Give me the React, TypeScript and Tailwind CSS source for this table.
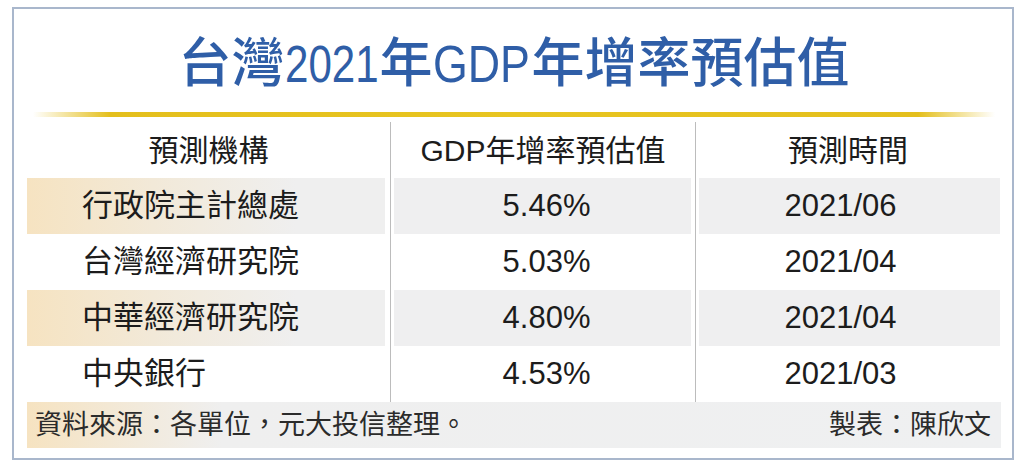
const rows = [
  { org: '行政院主計總處', rate: '5.46%', date: '2021/06', shaded: true },
  { org: '台灣經濟研究院', rate: '5.03%', date: '2021/04', shaded: false },
  { org: '中華經濟研究院', rate: '4.80%', date: '2021/04', shaded: true },
  { org: '中央銀行', rate: '4.53%', date: '2021/03', shaded: false },
];

const body = "font-['Liberation_Sans','Noto_Sans_CJK_TC',sans-serif]";

// Condensed latin run inside the title (the source face is a narrow sans)
function Narrow({ text, width, scale }: { text: string; width: string; scale: string }) {
  return (
    <span className={`inline-block ${width} whitespace-nowrap`}>
      <span className={`inline-block origin-left ${scale} font-['Liberation_Sans',sans-serif] text-[52px]`}>
        {text}
      </span>
    </span>
  );
}

export default function App() {
  return (
    <div className={`w-[1024px] h-[467px] bg-white pt-[7px] pl-[12px] ${body}`}>
      <div className="w-[1002px] h-[453px] border-2 border-[#a9b7cc] pl-[13px] pr-[11px]">
        {/* Title */}
        <div className="h-[103px] flex items-center justify-center pt-[1px]">
          <h1 className="text-[53px] leading-none font-medium text-[#2f5ea7] font-['Noto_Sans_CJK_TC',sans-serif] whitespace-nowrap">
            台灣
            <Narrow text="2021" width="w-[95px]" scale="scale-x-[0.81]" />
            年
            <Narrow text="GDP" width="w-[99px]" scale="scale-x-[0.86]" />
            年增率預估值
          </h1>
        </div>

        {/* Gold rule */}
        <div className="mx-[6px] h-[5px] bg-[linear-gradient(to_right,rgba(230,193,26,0),#e4bf1c_8%,#e8c520_50%,#e4bf1c_92%,rgba(230,193,26,0))]" />

        {/* Table */}
        <div className="mt-[5px] text-[#1c1c1c]">
          <div className="grid grid-cols-[363px_305px_305px] h-[56px] text-[30px]">
            <div className="flex items-center justify-center">預測機構</div>
            <div className="flex items-center justify-center border-l border-[#bcbcbc]">GDP年增率預估值</div>
            <div className="flex items-center justify-center border-l border-[#bcbcbc]">預測時間</div>
          </div>

          {rows.map((r) => (
            <div key={r.org} className="grid grid-cols-[363px_305px_305px] h-[56px] text-[31px]">
              <div className="pr-[5px]">
                <div
                  className={`h-full flex items-center pl-[55px] ${
                    r.shaded ? 'bg-[linear-gradient(to_right,#f6e3c1,#f2e9d8_35%,#efefef_75%)]' : ''
                  }`}
                >
                  {r.org}
                </div>
              </div>
              <div className="border-l border-[#bcbcbc] pl-[3px] pr-[4px]">
                <div className={`h-full flex items-center justify-center pl-[8px] ${r.shaded ? 'bg-[#efeff0]' : ''}`}>
                  {r.rate}
                </div>
              </div>
              <div className="border-l border-[#bcbcbc] pl-[3px]">
                <div className={`h-full flex items-center justify-center pr-[18px] ${r.shaded ? 'bg-[#efeff0]' : ''}`}>
                  {r.date}
                </div>
              </div>
            </div>
          ))}

          {/* Footer */}
          <div className="h-[46px] flex items-center justify-between pl-[8px] pr-[10px] text-[27px] text-[#2b2b2b] bg-[linear-gradient(to_right,#f6e3c1,#efefef_20%,#eff0f1)]">
            <span>資料來源：各單位，元大投信整理。</span>
            <span>製表：陳欣文</span>
          </div>
        </div>
      </div>
    </div>
  );
}
